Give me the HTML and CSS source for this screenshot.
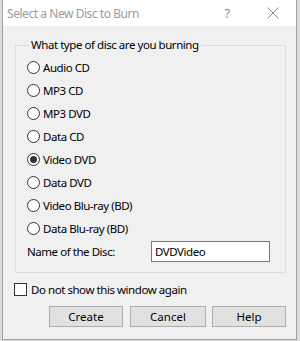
FILE: index.html
```html
<!DOCTYPE html>
<html lang="en">
<head>
  <meta charset="UTF-8">
  <title>Select a New Disc to Burn</title>
  <link rel="stylesheet" href="styles.css">
</head>
<body>

  <div class="window">
    <div class="titlebar">
      <span class="title">Select a New Disc to Burn</span>
      <span class="help-btn">?</span>
      <span class="close-btn">
        <svg width="12" height="12" viewBox="0 0 12 12">
          <path d="M0.5 0.5 L11.5 11.5 M11.5 0.5 L0.5 11.5" stroke="#8a8a8a" stroke-width="1" fill="none"/>
        </svg>
      </span>
    </div>

    <div class="content">
      <fieldset class="group">
        <legend>What type of disc are you burning</legend>
        <div class="options" id="options"></div>
        <div class="name-row">
          <label>Name of the Disc:</label>
          <div class="textbox">DVDVideo</div>
        </div>
      </fieldset>

      <div class="check-row">
        <span class="checkbox"></span>
        <span>Do not show this window again</span>
      </div>

      <div class="buttons">
        <button class="btn btn-create">Create</button>
        <button class="btn btn-cancel">Cancel</button>
        <button class="btn btn-help">Help</button>
      </div>
    </div>
  </div>

  <script>
    const discTypes = ['Audio CD', 'MP3 CD', 'MP3 DVD', 'Data CD', 'Video DVD', 'Data DVD', 'Video Blu-ray (BD)', 'Data Blu-ray (BD)'];
    const selected = 'Video DVD';

    const list = document.getElementById('options');
    discTypes.forEach(type => {
      list.innerHTML += `
        <div class="option">
          <span class="radio${type === selected ? ' checked' : ''}"></span>
          <span>${type}</span>
        </div>`;
    });
  </script>
</body>
</html>
```

FILE: styles.css
```css
body {
  margin: 0;
  background: #dcdcdc;
  font-family: "Noto Sans", sans-serif;
  font-size: 11.5px;
  letter-spacing: -0.45px;
  color: #000;
}
.window {
  margin-left: 2px;
  width: 293px;
  height: 339px;
  border: 1px solid #a0a0a0;
  border-top: none;
  background: #f0f0f0;
}
.titlebar {
  height: 26px;
  background: #fff;
  display: flex;
  align-items: center;
  padding-left: 4px;
}
.title {
  flex: 1;
  color: #9b9b9b;
  font-size: 12px;
}
.help-btn {
  width: 46px;
  text-align: center;
  color: #8a8a8a;
  font-size: 13px;
}
.close-btn {
  width: 46px;
  display: flex;
  justify-content: center;
}
.content {
  padding: 11px 10px 0 12px;
}
.group {
  margin: 0;
  padding: 0 0 0 11px;
  height: 236px;
  border: 1px solid #dcdcdc;
  box-sizing: border-box;
}
.group legend {
  margin-left: 2px;
  padding: 0 2px;
  line-height: 16px;
}
.options {
  padding-top: 3px;
}
.option {
  height: 23px;
  display: flex;
  align-items: center;
  gap: 3px;
}
.radio {
  width: 11px;
  height: 11px;
  border: 1px solid #333;
  border-radius: 50%;
  background: #fff;
  display: flex;
  align-items: center;
  justify-content: center;
}
.radio.checked::after {
  content: "";
  width: 7px;
  height: 7px;
  border-radius: 50%;
  background: #333;
}
.name-row {
  display: flex;
  align-items: center;
  margin-top: 1px;
}
.name-row label {
  width: 124px;
}
.textbox {
  width: 114px;
  height: 19px;
  line-height: 19px;
  padding-left: 3px;
  border: 1px solid #7a7a7a;
  background: #fff;
}
.check-row {
  display: flex;
  align-items: center;
  gap: 4px;
  margin-top: 9px;
  margin-left: -1px;
}
.checkbox {
  width: 11px;
  height: 11px;
  border: 1px solid #333;
  background: #fff;
}
.buttons {
  display: flex;
  justify-content: flex-end;
  gap: 7px;
  margin-top: 9px;
}
.btn {
  height: 21px;
  padding: 0;
  font: inherit;
  color: #000;
  background: #e1e1e1;
  border: 1px solid #adadad;
}
.btn-create { width: 74px; }
.btn-cancel { width: 76px; margin-right: -1px; }
.btn-help { width: 74px; }
```
